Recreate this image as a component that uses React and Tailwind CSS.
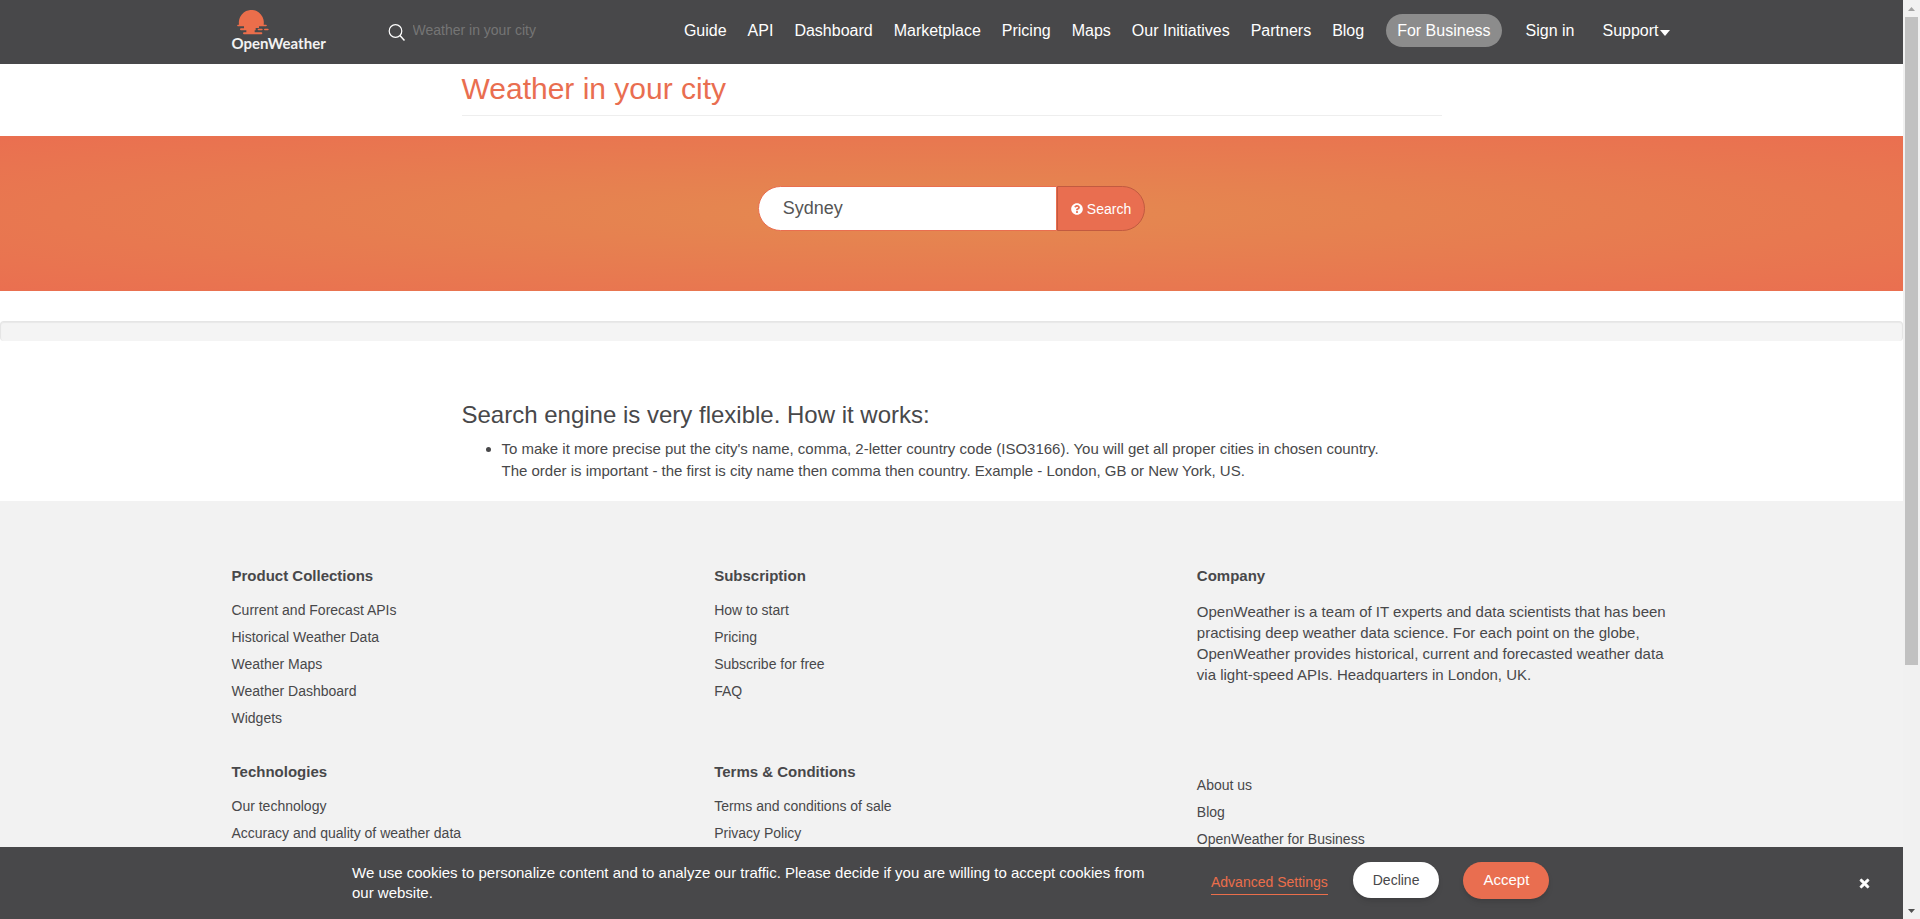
import React from "react";
import { FaQuestionCircle, FaTimes } from "react-icons/fa";

const navItems = ["Guide", "API", "Dashboard", "Marketplace", "Pricing", "Maps", "Our Initiatives", "Partners", "Blog"];

function Logo() {
  return (
    <a href="#" aria-label="OpenWeather home" className="flex w-24 flex-col pb-1">
      <svg viewBox="112 32 96 75" className="ml-[5px] h-[25px] w-8" fill="#eb6e4b" aria-hidden="true">
        <path d="M118 76a37.500 38 0 1 1 74 0h7a2.500 2.500 0 0 1 0 5h-21v5h-10v7h-3v6h20a3 3 0 0 1 0 6h-52a3 3 0 0 1 0-6h7v-6h-16a3 3 0 0 1 0-6h9v-6h-18a2.500 2.500 0 0 1 0-5z" />
        <rect x="174" y="88" width="15" height="5" rx="2.500" />
        <rect x="193" y="88" width="14" height="5" rx="2.500" />
      </svg>
      <span className="font-[Lato,sans-serif] text-[15px] leading-4 font-bold text-[#f2f2f2]">OpenWeather</span>
    </a>
  );
}

function Header() {
  return (
    <header className="bg-[#48484a] text-white">
      <div className="mx-auto flex h-16 max-w-[1440px] items-center justify-between">
        <div className="flex items-center">
          <Logo />
          <form className="ml-[60px] flex items-center gap-2" onSubmit={(e) => e.preventDefault()}>
            <svg viewBox="0 0 17 17" className="h-[17px] w-[17px]" fill="none" stroke="#fff" strokeWidth="1.200" aria-hidden="true">
              <circle cx="7.500" cy="7" r="6.300" />
              <path d="M12 11.500l4.500 5" strokeWidth="1.500" />
            </svg>
            <input
              type="text"
              aria-label="Weather in your city"
              placeholder="Weather in your city"
              className="w-40 bg-transparent pb-1 text-sm text-white outline-none placeholder:text-[#757575]"
            />
          </form>
        </div>
        <nav className="flex items-baseline pr-[2px] pb-1 text-base">
          <ul className="flex gap-[21px]">
            {navItems.map((item) => (
              <li key={item}>
                <a href="#">{item}</a>
              </li>
            ))}
          </ul>
          <a href="#" className="ml-[22px] rounded-full bg-[#8c8c8c] px-[11px] py-1 leading-[25px]">
            For Business
          </a>
          <a href="#" className="ml-6">
            Sign in
          </a>
          <button type="button" className="ml-7 flex items-center gap-px">
            Support
            <svg viewBox="0 0 10 6" className="mt-1 h-[6px] w-[10px]" fill="#fff" aria-hidden="true">
              <path d="M0 0h10L5 6z" />
            </svg>
          </button>
        </nav>
      </div>
    </header>
  );
}

function SearchBanner() {
  return (
    <section className="flex h-[155px] items-start justify-center bg-[radial-gradient(ellipse_at_center,#e48a50,#ea6f50)] pt-[50px]">
      <form className="flex h-[45px]" onSubmit={(e) => e.preventDefault()}>
        <input
          type="text"
          aria-label="City name"
          defaultValue="Sydney"
          className="w-[299px] rounded-l-full border border-[#e96e50] bg-white pr-3 pb-[2px] pl-6 text-lg text-[#555] outline-none"
        />
        <button
          type="submit"
          className="flex items-center gap-1 rounded-r-full border border-[#c25a40] bg-[#e96e50] px-[13px] text-sm text-white"
        >
          <FaQuestionCircle className="h-3 w-3" aria-hidden="true" />
          Search
        </button>
      </form>
    </section>
  );
}

function FooterLinks({ title, links }) {
  return (
    <div>
      <h5 className="text-[15px] leading-4 font-bold">{title}</h5>
      <ul className="mt-[13px] text-sm leading-[27px]">
        {links.map((link) => (
          <li key={link}>
            <a href="#">{link}</a>
          </li>
        ))}
      </ul>
    </div>
  );
}

function Footer() {
  return (
    <footer className="grow bg-[#f2f2f2] pt-[67px]">
      <div className="mx-auto grid max-w-[1440px] grid-cols-3 gap-x-2 gap-y-8">
        <FooterLinks
          title="Product Collections"
          links={["Current and Forecast APIs", "Historical Weather Data", "Weather Maps", "Weather Dashboard", "Widgets"]}
        />
        <FooterLinks title="Subscription" links={["How to start", "Pricing", "Subscribe for free", "FAQ"]} />
        <div>
          <h5 className="text-[15px] leading-4 font-bold">Company</h5>
          <p className="mt-[17px] text-[15px] leading-[21px]">
            OpenWeather is a team of IT experts and data scientists that has been practising deep weather data science.
            For each point on the globe, OpenWeather provides historical, current and forecasted weather data via
            light-speed APIs. Headquarters in London, UK.
          </p>
        </div>
        <FooterLinks title="Technologies" links={["Our technology", "Accuracy and quality of weather data"]} />
        <FooterLinks title="Terms & Conditions" links={["Terms and conditions of sale", "Privacy Policy"]} />
        <ul className="mt-2 text-sm leading-[27px]">
          {["About us", "Blog", "OpenWeather for Business"].map((link) => (
            <li key={link}>
              <a href="#">{link}</a>
            </li>
          ))}
        </ul>
      </div>
    </footer>
  );
}

function CookieBar() {
  return (
    <div className="absolute inset-x-0 bottom-0 flex h-[72px] items-start bg-[#48484a] pt-[15px] pl-[352px] text-white">
      <p className="w-[800px] pt-px text-[15px] leading-5">
        We use cookies to personalize content and to analyze our traffic. Please decide if you are willing to accept
        cookies from our website.
      </p>
      <a href="#" className="mt-[10px] ml-[59px] border-b border-[#eb6e4b] pb-[2px] text-sm leading-5 text-[#eb6e4b]">
        Advanced Settings
      </a>
      <button type="button" className="ml-[25px] h-9 rounded-full bg-white px-5 text-sm text-[#48484a] shadow-md">
        Decline
      </button>
      <button type="button" className="ml-6 h-[37px] rounded-full bg-[#e96e50] px-5 text-[15px] text-white shadow-md">
        Accept
      </button>
      <button type="button" aria-label="Close" className="mt-[15px] mr-8 ml-auto">
        <FaTimes className="h-[13px] w-[13px]" stroke="#fff" strokeWidth="30" />
      </button>
    </div>
  );
}

function ScrollTrack() {
  return (
    <div className="flex w-[17px] shrink-0 flex-col items-center justify-between bg-[#f1f1f1]" aria-hidden="true">
      <div className="flex h-[665px] w-full flex-col items-center">
        <svg viewBox="0 0 17 17" className="h-[17px] w-[17px] shrink-0" fill="#a3a3a3">
          <path d="M5 11h7L8.500 7z" />
        </svg>
        <div className="w-[13px] grow bg-[#c1c1c1]" />
      </div>
      <svg viewBox="0 0 17 17" className="h-[17px] w-[17px]" fill="#505050">
        <path d="M5 7h7l-3.500 4z" />
      </svg>
    </div>
  );
}

export default function App() {
  return (
    <div className="flex h-screen overflow-hidden bg-white font-['Liberation_Sans',Arial,sans-serif] text-[#48484a]">
      <div className="relative flex min-w-0 grow flex-col overflow-hidden">
        <Header />
        <main className="shrink-0">
          <div className="mx-auto max-w-[980px] pt-2 pb-5">
            <h1 className="border-b border-[#eee] pb-[10px] text-[30px] leading-[33px] text-[#e96e50]">
              Weather in your city
            </h1>
          </div>
          <SearchBanner />
          <div className="mt-[30px] h-5 rounded border border-b-0 border-[#e5e5e5] bg-[#f4f4f4] shadow-[inset_0_1px_1px_rgba(0,0,0,0.05)]" />
          <div className="mx-auto max-w-[980px] pt-[61px] pb-[19px]">
            <h2 className="text-2xl leading-[26px]">Search engine is very flexible. How it works:</h2>
            <ul className="mt-[10px] list-disc pl-10 text-[15px] leading-[22px]">
              <li>
                To make it more precise put the city's name, comma, 2-letter country code (ISO3166). You will get all
                proper cities in chosen country.
                <br />
                The order is important - the first is city name then comma then country. Example - London, GB or New
                York, US.
              </li>
            </ul>
          </div>
        </main>
        <Footer />
        <CookieBar />
      </div>
      <ScrollTrack />
    </div>
  );
}
